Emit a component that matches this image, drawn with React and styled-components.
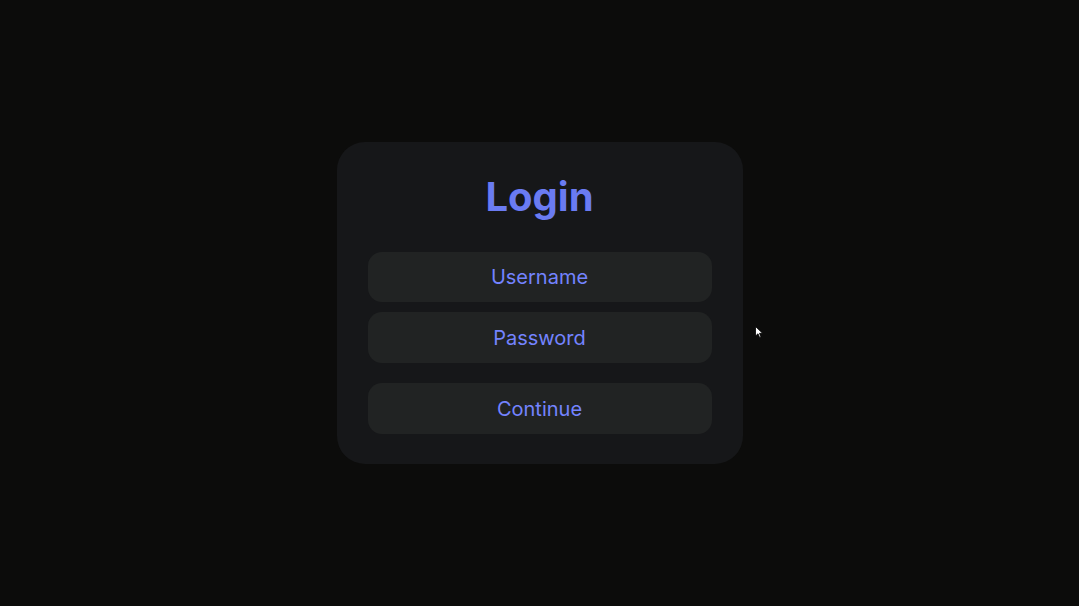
import React from "react";
import styled, { createGlobalStyle } from "styled-components";

const Global = createGlobalStyle`
  html, body { margin: 0; padding: 0; background: #0c0c0b; }
  body { font-family: Inter, "Noto Sans", sans-serif; }
  * { box-sizing: border-box; }
`;

const Page = styled.div`
  position: relative;
  width: 100vw;
  height: 100vh;
  display: flex;
  align-items: center;
  justify-content: center;
  background: #0c0c0b;
`;

const Card = styled.form`
  width: 406px;
  padding: 31px 31px 30px;
  background: #161719;
  border-radius: 28px;
  display: flex;
  flex-direction: column;
`;

const Title = styled.h1`
  margin: 0 0 31px;
  font-size: 40px;
  line-height: 48px;
  font-weight: 700;
  text-align: center;
  color: #6a7bf2;
`;

const Field = styled.input`
  height: ${(p) => p.$h}px;
  width: 100%;
  border: none;
  outline: none;
  border-radius: 14px;
  background: #212323;
  color: #7483ff;
  font-family: Inter, sans-serif;
  font-size: 20px;
  text-align: center;
  margin-bottom: ${(p) => p.$gap}px;
  &::placeholder { color: #7483ff; opacity: 1; }
`;

const Button = styled.button`
  height: 51px;
  width: 100%;
  border: none;
  border-radius: 14px;
  background: #212323;
  color: #7483ff;
  font-family: Inter, sans-serif;
  font-size: 20px;
  cursor: pointer;
`;

const Cursor = styled.svg`
  position: absolute;
  left: 755px;
  top: 326px;
`;

export default function App() {
  return (
    <Page>
      <Global />
      <Card onSubmit={(e) => e.preventDefault()}>
        <Title>Login</Title>
        <Field placeholder="Username" $h={50} $gap={10} />
        <Field placeholder="Password" type="password" $h={51} $gap={20} />
        <Button type="submit">Continue</Button>
      </Card>
      <Cursor width="10" height="14" viewBox="0 0 10 14">
        <path d="M0.5 0.5 L0.5 10 L3 7.8 L4.6 11.5 L6 10.9 L4.5 7.3 L7.6 7.3 Z" fill="#fff" stroke="#000" strokeWidth="0.8" />
      </Cursor>
    </Page>
  );
}
